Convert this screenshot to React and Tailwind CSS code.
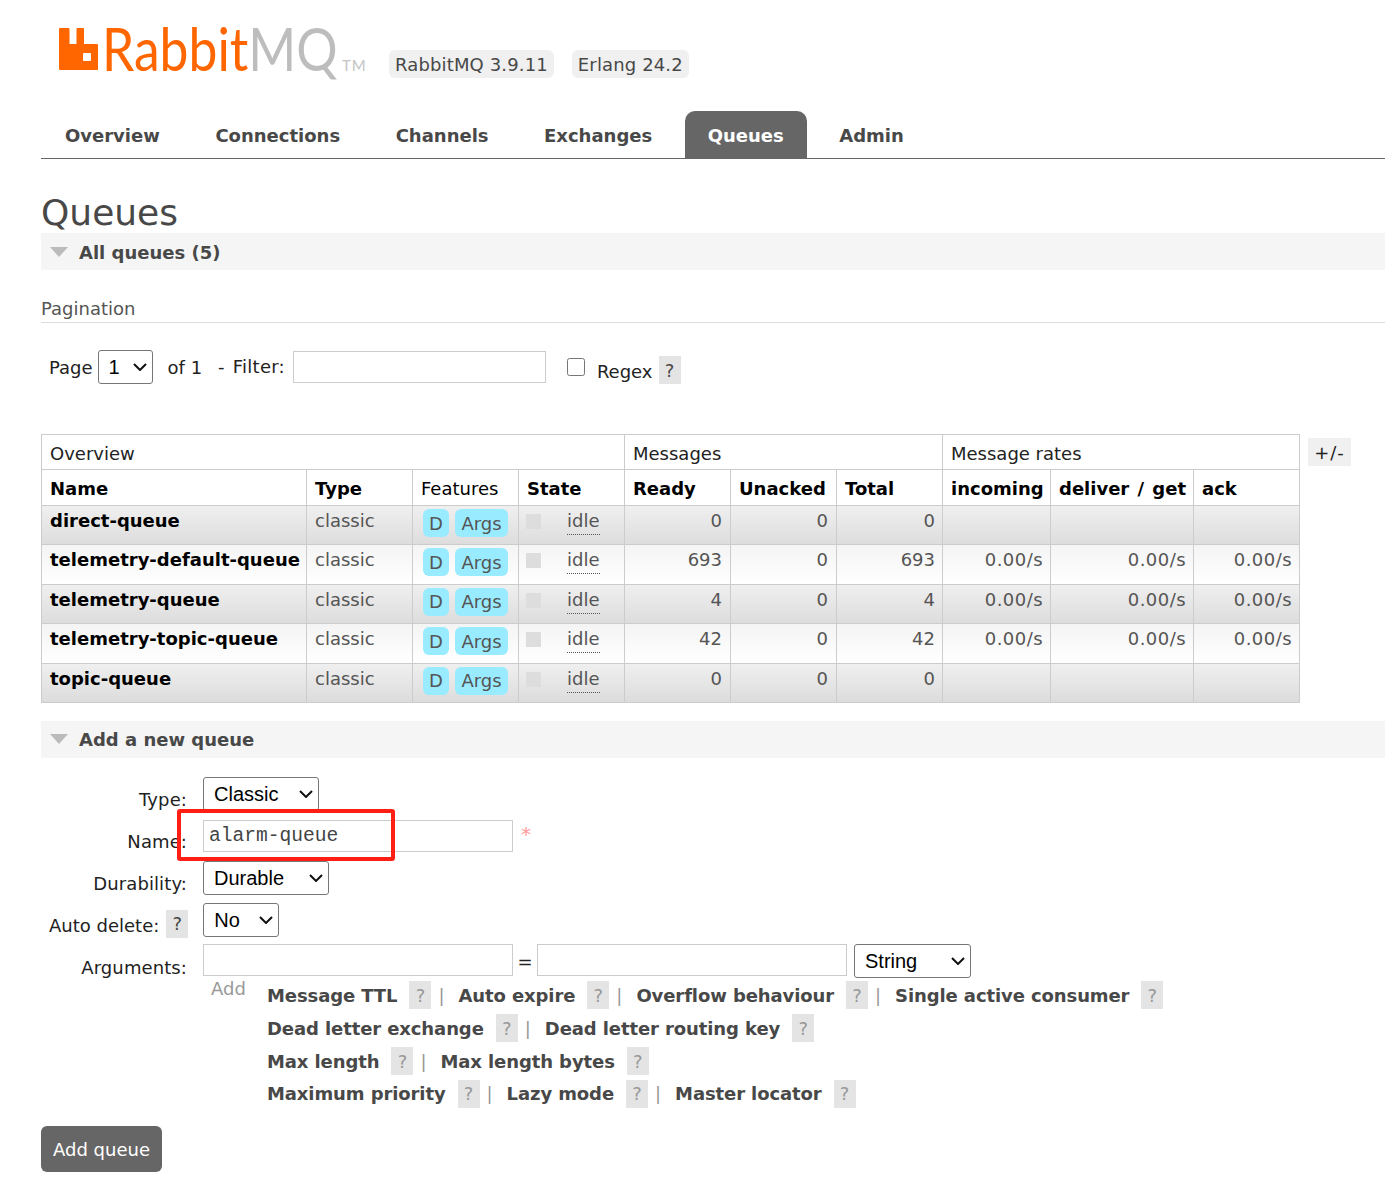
import React from "react";

const rows = [
  { name: "direct-queue", ready: "0", unacked: "0", total: "0", rates: false },
  { name: "telemetry-default-queue", ready: "693", unacked: "0", total: "693", rates: true },
  { name: "telemetry-queue", ready: "4", unacked: "0", total: "4", rates: true },
  { name: "telemetry-topic-queue", ready: "42", unacked: "0", total: "42", rates: true },
  { name: "topic-queue", ready: "0", unacked: "0", total: "0", rates: false },
];

const navItems = ["Overview", "Connections", "Channels", "Exchanges", "Queues", "Admin"];

const Help = ({ className = "" }) => (
  <span className={`inline-flex h-[28px] w-[22px] items-center justify-center bg-[#e4e4e4] ${className}`}>?</span>
);

const Logo = () => (
  <div className="flex items-start">
    <svg width="39" height="42" viewBox="0 0 39 42" className="mt-[28px] ml-[18px] shrink-0">
      <path
        fillRule="evenodd"
        fill="#ff6600"
        d="M1 0h8.500a1 1 0 0 1 1 1v15h7V1a1 1 0 0 1 1-1h5.500a1 1 0 0 1 1 1v15h12.500a2 2 0 0 1 2 2v22a2 2 0 0 1-2 2H1a1 1 0 0 1-1-1V1a1 1 0 0 1 1-1zM25 25a1 1 0 0 0-1 1v6a1 1 0 0 0 1 1h6a1 1 0 0 0 1-1v-6a1 1 0 0 0-1-1z"
      />
    </svg>
    <div className="mt-[13px] ml-[4px] w-[234px] origin-left scale-x-[0.86] whitespace-nowrap font-['Lato'] text-[60px] leading-[70px]">
      <span className="text-[#ff6600]">Rabbit</span>
      <span className="text-[#bdbdbd]">MQ</span>
    </div>
    <span className="mt-[55px] ml-[6px] font-['Lato'] text-[15px] leading-[20px] tracking-[1px] text-[#c4c4c4]">TM</span>
  </div>
);

const Section = ({ title }) => (
  <div className="flex h-[37px] items-center bg-[#f5f5f5] pl-[9px]">
    <svg width="18" height="10" viewBox="0 0 18 10" className="mr-[11px]">
      <path d="M0 0h18L9 10z" fill="#bbbbbb" />
    </svg>
    <span className="pt-px font-bold text-[#484848]">{title}</span>
  </div>
);

// native select with the larger chevron of the reference drawn on top
const Select = ({ value, width, className = "" }) => (
  <div className={`relative h-[34px] shrink-0 ${width} ${className}`}>
    <select className="h-full w-full appearance-none rounded-[3px] border border-[#767676] bg-white pl-[10px] font-['Liberation_Sans',sans-serif] text-[20px] text-black">
      <option>{value}</option>
    </select>
    <svg width="14" height="8" viewBox="0 0 14 8" className="pointer-events-none absolute right-[6px] top-[13px]">
      <path d="M1 1l6 6 6-6" fill="none" stroke="#111" strokeWidth="2" />
    </svg>
  </div>
);

const Prop = ({ children }) => <span className="font-bold tracking-[-0.1px] text-[#484848]">{children}</span>;
const PropHelp = () => <Help className="ml-[12px] text-[#999]" />;
const Sep = () => <span className="ml-[7px] mr-[14px] text-[#999]">|</span>;

const cell = "border border-[#ccc] px-[8px] align-top pt-[1px]";
const numCell = `${cell} text-right text-[#555]`;
const rateCell = `border border-[#ccc] pl-[8px] pr-[7px] align-top pt-[1px] text-right tracking-[0.45px] text-[#555]`;
const headCell = "border border-[#ccc] px-[8px] pt-[2px]";

export default function App() {
  return (
    <div className="relative h-[1192px] w-[1385px] overflow-hidden bg-white pl-[41px] font-['DejaVu_Sans',sans-serif] text-[18px] text-[#484848]">
      {/* header */}
      <div className="flex h-[111px] items-start">
        <div className="w-[325px] shrink-0">
          <Logo />
        </div>
        <div className="mt-[50px] ml-[23px] flex gap-[18px] text-[#484848]">
          <span className="flex h-[28px] items-center rounded-[6px] bg-[#f0f0f0] px-[6px] tracking-[0.14px]">RabbitMQ 3.9.11</span>
          <span className="flex h-[28px] items-center rounded-[6px] bg-[#f0f0f0] px-[6px] tracking-[0.14px]">Erlang 24.2</span>
        </div>
      </div>

      {/* nav */}
      <div className="flex h-[48px] gap-[9.5px] border-b border-[#666] pl-px">
        {navItems.map((item) =>
          item === "Queues" ? (
            <span key={item} className="flex h-[47px] items-center rounded-t-[10px] bg-[#666] px-[23px] pt-[2px] font-bold text-white">{item}</span>
          ) : (
            <span key={item} className="flex h-[47px] items-center px-[23px] pt-[2px] font-bold text-[#484848]">{item}</span>
          )
        )}
      </div>

      <h1 className="mt-[29px] h-[45px] pt-px text-[36px] leading-[48px] text-[#484848]">Queues</h1>
      <Section title="All queues (5)" />

      <div className="mt-[27px] h-[26px] border-b border-[#ddd] leading-[24px] text-[#555]">Pagination</div>

      {/* pagination controls */}
      <div className="mt-[27px] flex h-[36px] items-start pl-[8px] text-[#222]">
        <span className="mt-[4px]">Page</span>
        <Select value="1" width="w-[55px]" className="ml-[5px]" />
        <span className="mt-[4px] ml-[15px]">of 1</span>
        <span className="mt-[3px] ml-[16px] tracking-[0.25px] [word-spacing:2px]">- Filter:</span>
        <input className="mt-px ml-[8px] h-[32px] w-[253px] border border-[#ccc]" />
        <input type="checkbox" className="mt-[8px] ml-[21px] h-[18px] w-[18px]" />
        <span className="mt-[8px] ml-[12px]">Regex</span>
        <Help className="mt-[6px] ml-[6px] text-[#484848]" />
      </div>

      {/* queue table */}
      <div className="mt-[48px] flex items-start">
        <table className="w-[1258px] table-fixed border-collapse text-[#222]">
          <colgroup>
            <col className="w-[265px]" />
            <col className="w-[106px]" />
            <col className="w-[106px]" />
            <col className="w-[106px]" />
            <col className="w-[106px]" />
            <col className="w-[106px]" />
            <col className="w-[106px]" />
            <col className="w-[108px]" />
            <col className="w-[143px]" />
            <col className="w-[106px]" />
          </colgroup>
          <thead>
            <tr className="h-[35px]">
              <th colSpan={4} className={`${headCell} text-left font-normal`}>Overview</th>
              <th colSpan={3} className={`${headCell} text-left font-normal`}>Messages</th>
              <th colSpan={3} className={`${headCell} text-left font-normal`}>Message rates</th>
            </tr>
            <tr className="h-[36px] text-left text-black">
              <th className={headCell}>Name</th>
              <th className={headCell}>Type</th>
              <th className={`${headCell} font-normal`}>Features</th>
              <th className={headCell}>State</th>
              <th className={headCell}>Ready</th>
              <th className={headCell}>Unacked</th>
              <th className={headCell}>Total</th>
              <th className={headCell}>incoming</th>
              <th className={`${headCell} whitespace-nowrap [word-spacing:2px]`}>deliver / get</th>
              <th className={headCell}>ack</th>
            </tr>
          </thead>
          <tbody>
            {rows.map((row, i) => (
              <tr
                key={row.name}
                className={`h-[39.4px] ${i % 2 === 0 ? "bg-linear-to-b from-[#f0f0f0] to-[#dcdcdc]" : "bg-linear-to-b from-[#f4f4f4] to-white"}`}
              >
                <td className={`${cell} whitespace-nowrap font-bold text-black`}>{row.name}</td>
                <td className={`${cell} text-[#555]`}>classic</td>
                <td className="border border-[#ccc] pl-[10px] align-top pt-[3px]">
                  <div className="flex gap-[6px] text-[#555]">
                    <span className="flex h-[28px] w-[26px] items-center justify-center rounded-[6px] bg-[#99ebff]">D</span>
                    <span className="flex h-[28px] w-[53px] items-center justify-center rounded-[6px] bg-[#99ebff]">Args</span>
                  </div>
                </td>
                <td className="border border-[#ccc] pl-[7px] align-top pt-[2px] text-[#555]">
                  <div className="flex items-start">
                    <span className="mt-[6px] h-[15px] w-[15px] bg-[#dddddd]" />
                    <span className="ml-[26px] border-b border-dotted border-[#555] leading-[26px]">idle</span>
                  </div>
                </td>
                <td className={numCell}>{row.ready}</td>
                <td className={numCell}>{row.unacked}</td>
                <td className={`${numCell} pr-[7px]`}>{row.total}</td>
                <td className={rateCell}>{row.rates ? "0.00/s" : ""}</td>
                <td className={rateCell}>{row.rates ? "0.00/s" : ""}</td>
                <td className={rateCell}>{row.rates ? "0.00/s" : ""}</td>
              </tr>
            ))}
          </tbody>
        </table>
        <span className="ml-[8px] mt-[4px] flex h-[28px] w-[43px] items-center justify-center bg-[#f0f0f0] tracking-[1px] text-[#222]">+/-</span>
      </div>

      <div className="mt-[18px]">
        <Section title="Add a new queue" />
      </div>

      {/* add queue form */}
      <div className="mt-[19px] text-[#222]">
        <div className="flex h-[42px] items-start">
          <span className="mt-[9px] w-[146px] text-right tracking-[0.1px]">Type:</span>
          <Select value="Classic" width="w-[116px]" className="ml-[16px]" />
        </div>
        <div className="flex h-[42px] items-start">
          <span className="mt-[9px] w-[146px] text-right tracking-[0.1px]">Name:</span>
          <input
            readOnly
            value="alarm-queue"
            className="mt-px ml-[16px] h-[32px] w-[310px] border border-[#ccc] pl-[5px] pt-px font-['Liberation_Mono',monospace] text-[19.6px] text-[#444]"
          />
          <span className="ml-[8px] text-[20px] text-[#f99]">*</span>
        </div>
        <div className="flex h-[42px] items-start">
          <span className="mt-[9px] w-[146px] text-right tracking-[0.1px]">Durability:</span>
          <Select value="Durable" width="w-[126px]" className="ml-[16px]" />
        </div>
        <div className="flex h-[41px] items-start">
          <span className="mt-[9px] ml-[8px]">Auto delete:</span>
          <Help className="mt-[7px] ml-[7px] text-[#484848]" />
          <Select value="No" width="w-[76px]" className="ml-[15px]" />
        </div>
        <div className="flex h-[35px] items-start">
          <span className="mt-[10px] w-[146px] text-right tracking-[0.1px]">Arguments:</span>
          <input className="ml-[16px] h-[32px] w-[310px] border border-[#ccc]" />
          <span className="mt-[4px] w-[24px] text-center">=</span>
          <input className="h-[32px] w-[310px] border border-[#ccc]" />
          <Select value="String" width="w-[117px]" className="ml-[7px]" />
        </div>

        <div className="flex items-start">
          <span className="mt-[-4px] ml-[170px] w-[56px] text-[#999]">Add</span>
          <div className="flex flex-col">
            <div className="flex h-[33px] items-center">
              <Prop>Message TTL</Prop><PropHelp /><Sep />
              <Prop>Auto expire</Prop><PropHelp /><Sep />
              <Prop>Overflow behaviour</Prop><PropHelp /><Sep />
              <Prop>Single active consumer</Prop><PropHelp />
            </div>
            <div className="flex h-[33px] items-center">
              <Prop>Dead letter exchange</Prop><PropHelp /><Sep />
              <Prop>Dead letter routing key</Prop><PropHelp />
            </div>
            <div className="flex h-[33px] items-center">
              <Prop>Max length</Prop><PropHelp /><Sep />
              <Prop>Max length bytes</Prop><PropHelp />
            </div>
            <div className="flex h-[32px] items-center">
              <Prop>Maximum priority</Prop><PropHelp /><Sep />
              <Prop>Lazy mode</Prop><PropHelp /><Sep />
              <Prop>Master locator</Prop><PropHelp />
            </div>
          </div>
        </div>
      </div>

      <button className="mt-[16px] flex h-[46px] w-[121px] items-center justify-center rounded-[6px] bg-[#666] pt-px text-white">Add queue</button>

      {/* red annotation around the name field */}
      <div className="absolute left-[177px] top-[809px] h-[52px] w-[218px] rounded-[3px] border-[4px] border-[#ff1f14]" />
    </div>
  );
}
